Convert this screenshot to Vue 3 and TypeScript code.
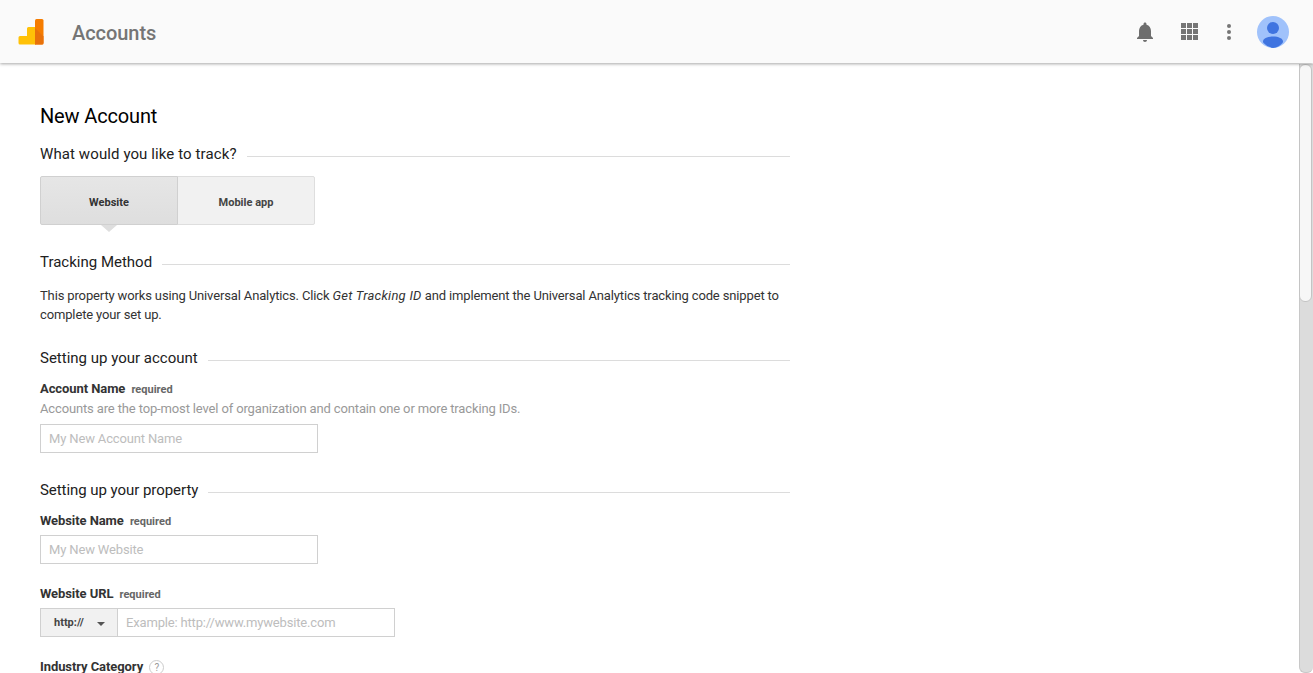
<script setup lang="ts">
const dots = Array.from({ length: 9 }, (_, i) => i)
</script>

<template>
  <div class="page">
    <header class="topbar">
      <svg class="logo" width="26" height="26" viewBox="0 0 26 26">
        <path fill="#ffc107" d="M2 25.500a1.500 1.500 0 0 1-1.500-1.500v-5.500A1.500 1.500 0 0 1 2 17h7V9.500A1.500 1.500 0 0 1 10.500 8H18v17.500z" />
        <path fill="#f57c00" d="M17 1.500A1.500 1.500 0 0 1 18.500 0h5.500a1.500 1.500 0 0 1 1.500 1.500V24a1.500 1.500 0 0 1-1.500 1.500h-7z" />
        <path fill="#e8710a" d="M17 9l8.500 8.500V24a1.500 1.500 0 0 1-1.500 1.500h-7z" />
      </svg>
      <span class="title">Accounts</span>
      <div class="spacer"></div>
      <svg class="bell" width="24" height="24" viewBox="0 0 24 24">
        <path fill="#6e6e6e" d="M12 22c1.100 0 2-.9 2-2h-4c0 1.100.9 2 2 2zm6-6v-5c0-3.070-1.640-5.640-4.500-6.320V4c0-.83-.67-1.500-1.500-1.500s-1.500.67-1.500 1.500v.68C7.630 5.360 6 7.920 6 11v5l-2 2v1h16v-1l-2-2z" />
      </svg>
      <div class="apps">
        <i v-for="d in dots" :key="d"></i>
      </div>
      <div class="more"><i></i><i></i><i></i></div>
      <svg class="avatar" width="32" height="32" viewBox="0 0 32 32">
        <circle cx="16" cy="16" r="16" fill="#a0c2fb" />
        <circle cx="16" cy="12" r="6" fill="#3f74e0" />
        <path fill="#3f74e0" d="M6 25.500C6 22.500 10.500 20.500 16 20.500s10 2 10 5c0 .6-.2 1-.5 1.400A16 16 0 0 1 16 32a16 16 0 0 1-9.500-5.100C6.200 26.500 6 26.100 6 25.500z" />
      </svg>
    </header>

    <div class="body">
      <main class="content">
        <h1>New Account</h1>

        <div class="section first"><span>What would you like to track?</span><b></b></div>
        <div class="tabs">
          <div class="tab active">Website</div>
          <div class="tab">Mobile app</div>
        </div>

        <div class="section method"><span>Tracking Method</span><b></b></div>
        <p class="desc">This property works using Universal Analytics. Click <em>Get Tracking ID</em> and implement the Universal Analytics tracking code snippet to complete your set up.</p>

        <div class="section account"><span>Setting up your account</span><b></b></div>
        <div class="label acct">Account Name <small>required</small></div>
        <div class="hint">Accounts are the top-most level of organization and contain one or more tracking IDs.</div>
        <input class="field" placeholder="My New Account Name" />

        <div class="section property"><span>Setting up your property</span><b></b></div>
        <div class="label site-label">Website Name <small>required</small></div>
        <input class="field site" placeholder="My New Website" />

        <div class="label url">Website URL <small>required</small></div>
        <div class="urlrow">
          <div class="proto">http://<i></i></div>
          <input class="urlinput" placeholder="Example: http://www.mywebsite.com" />
        </div>

        <div class="label industry">Industry Category <span class="help">?</span></div>
      </main>
      <aside class="scrollbar"><div class="thumb"></div></aside>
    </div>
  </div>
</template>

<style>
html, body { margin: 0; height: 100%; overflow: hidden; background: #fff; }
</style>

<style scoped>
.page { height: 673px; display: flex; flex-direction: column; font-family: Roboto, "Liberation Sans", sans-serif; color: #212121; overflow: hidden; }
.topbar { height: 63px; flex: none; box-sizing: border-box; background: #fafafa; display: flex; align-items: center; padding-left: 18px; padding-right: 24px; box-shadow: 0 1px 3px rgba(0,0,0,.35); position: relative; z-index: 2; margin-bottom: 1px; }
.logo { flex: none; }
.title { margin-left: 28px; margin-top: 2px; font-size: 20px; font-weight: 500; color: #757575; letter-spacing: -.05px; }
.spacer { flex: 1; }
.bell { margin-right: 24px; }
.apps { display: grid; grid-template-columns: repeat(3, 5px); grid-auto-rows: 5px; gap: 1px; margin-right: 29px; }
.apps i { background: #757575; }
.more { display: flex; flex-direction: column; gap: 2px; margin-right: 26px; }
.more i { width: 4px; height: 4px; border-radius: 50%; background: #757575; }
.body { flex: 1; display: flex; min-height: 0; }
.content { flex: 1; padding: 40px 0 0 40px; overflow: hidden; }
h1 { margin: 0; font-size: 20px; font-weight: 400; line-height: 24px; color: #000; letter-spacing: -.15px; }
.section { width: 750px; display: flex; align-items: center; font-size: 15px; line-height: 20px; color: #212121; }
.section span { margin-right: 10px; }
.section b { flex: 1; height: 1px; background: #dcdcdc; margin-top: 5px; }
.first { margin-top: 16px; }
.first span { letter-spacing: .1px; }
.tabs { display: flex; margin-top: 12px; width: 275px; height: 49px; box-sizing: border-box; }
.tab { width: 138px; height: 49px; box-sizing: border-box; border: 1px solid #dedede; border-radius: 0 2px 2px 0; background: #f1f1f1; display: flex; align-items: center; justify-content: center; font-size: 11px; font-weight: 700; color: #444; padding-top: 4px; letter-spacing: .02px; }
.tab + .tab { margin-left: -1px; }
.tab.active { position: relative; z-index: 1; border-radius: 2px 0 0 2px; background: linear-gradient(#e6e6e6, #dedede); border-color: #d0d0d0; color: #333; }
.tab.active::after { content: ""; position: absolute; left: 60px; bottom: -8px; border-left: 8px solid transparent; border-right: 8px solid transparent; border-top: 7px solid #dedede; }
.method { margin-top: 27px; }
.desc { width: 750px; margin: 14px 0 0; font-size: 13px; line-height: 19px; color: #333; letter-spacing: -.14px; }
.desc em { letter-spacing: .26px; }
.account { margin-top: 24px; }
.property span { letter-spacing: -.05px; }
.label { margin-top: 11px; font-size: 13px; font-weight: 700; line-height: 16px; color: #333; letter-spacing: -.08px; }
.label small { font-size: 11px; color: #666; margin-left: 3px; letter-spacing: 0; }
.acct { margin-top: 13px; }
.hint { margin-top: 3px; font-size: 13px; line-height: 16px; color: #999; letter-spacing: -.14px; }
.field { display: block; width: 278px; height: 29px; margin-top: 7px; box-sizing: border-box; border: 1px solid #d0d0d0; padding: 0 8px; font: 13px Roboto, sans-serif; letter-spacing: -.15px; outline: none; }
.field::placeholder, .urlinput::placeholder { color: #bdbdbd; opacity: 1; }
.property { margin-top: 27px; }
.site-label { margin-top: 13px; }
.site { margin-top: 5px; }
.url { margin-top: 22px; }
.urlrow { display: flex; margin-top: 5px; height: 29px; }
.proto { width: 77px; box-sizing: border-box; border: 1px solid #d0d0d0; border-right: 0; background: #f1f1f1; font-size: 11px; font-weight: 700; color: #444; display: flex; align-items: center; padding-left: 13px; position: relative; }
.proto i { position: absolute; left: 56px; top: 13px; border-left: 4px solid transparent; border-right: 4px solid transparent; border-top: 4px solid #555; }
.urlinput { width: 278px; box-sizing: border-box; border: 1px solid #d0d0d0; padding: 0 8px; font: 13px Roboto, sans-serif; letter-spacing: -.17px; outline: none; }
.industry { margin-top: 22px; }
.help { display: inline-block; width: 13px; height: 13px; line-height: 13px; margin-left: 3px; border: 1px solid #ccc; border-radius: 50%; text-align: center; font-size: 10px; font-weight: 400; color: #999; }
.scrollbar { width: 14px; flex: none; background: #dcdcdc; border: 1px solid #c8c8c8; border-top: 0; border-right: 0; border-radius: 0 0 6px 6px; box-sizing: border-box; }
.thumb { width: 13px; height: 238px; margin-left: -1px; box-sizing: border-box; background: #f7f7f7; border: 1px solid #c4c4c4; border-radius: 6px; }
</style>
